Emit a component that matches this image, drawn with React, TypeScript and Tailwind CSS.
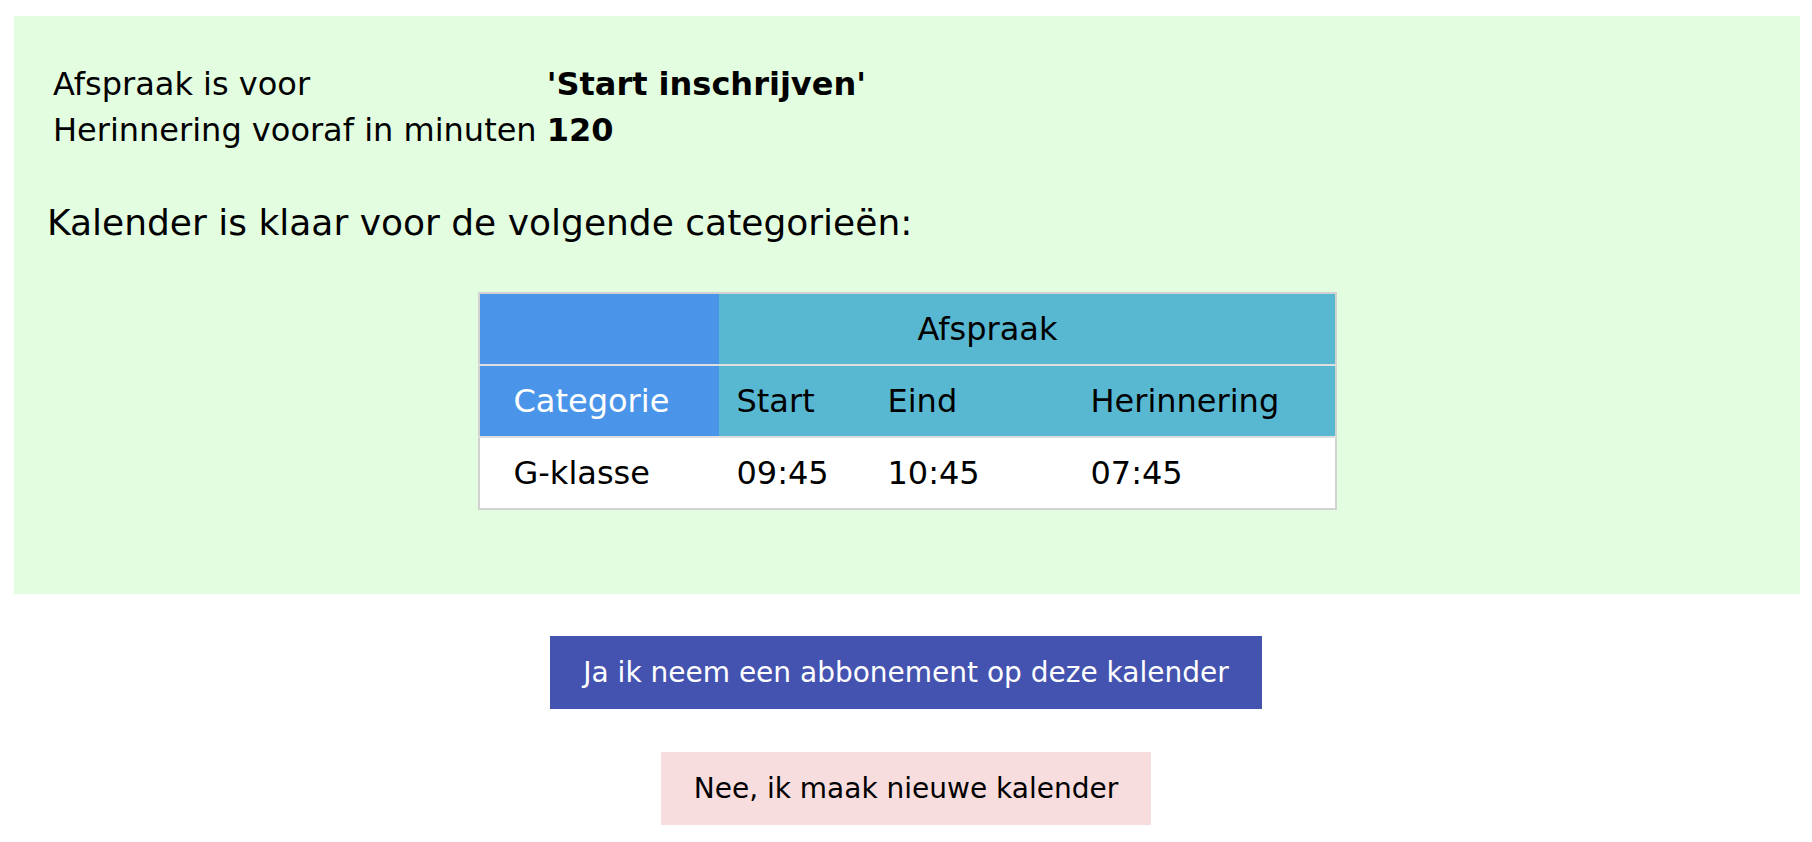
import React from 'react';

interface Row {
  categorie: string;
  start: string;
  eind: string;
  herinnering: string;
}

const rows: Row[] = [{ categorie: 'G-klasse', start: '09:45', eind: '10:45', herinnering: '07:45' }];

const font = { fontFamily: '"DejaVu Sans", Verdana, sans-serif' };

const App = () => {
  return (
    <div className="min-h-screen bg-white pt-[16px] text-black" style={font}>
      <div className="ml-[14px] mr-[12px] h-[578px] bg-[#e2fde0] pt-[45px]">
        <table className="ml-[39px] border-collapse text-[32px] leading-[46px]">
          <tbody>
            <tr className="h-[46px]">
              <td className="p-0 pr-[10px] align-middle">Afspraak is voor</td>
              <td className="p-0 align-middle font-bold">'Start inschrijven'</td>
            </tr>
            <tr className="h-[46px]">
              <td className="p-0 pr-[10px] align-middle">Herinnering vooraf in minuten</td>
              <td className="p-0 align-middle font-bold">120</td>
            </tr>
          </tbody>
        </table>

        <h2 className="ml-[33px] mt-[48px] text-[36px] leading-[44px] font-normal">
          Kalender is klaar voor de volgende categorieën:
        </h2>

        <div className="mt-[47px] flex justify-center">
          <table className="w-[859px] border-collapse border-2 border-[#d2d2d2] text-[32px]">
            <thead>
              <tr className="h-[72px] border-b-2 border-[#dedede]">
                <th className="w-[240px] bg-[#4a95e9] p-0"></th>
                <th colSpan={3} className="bg-[#58b8d2] p-0 pl-[199px] text-left font-normal">
                  Afspraak
                </th>
              </tr>
              <tr className="h-[72px] border-b-2 border-[#dedede]">
                <th className="bg-[#4a95e9] p-0 pl-[34px] text-left font-normal text-white">Categorie</th>
                <th className="w-[151px] bg-[#58b8d2] p-0 pl-[18px] text-left font-normal">Start</th>
                <th className="w-[203px] bg-[#58b8d2] p-0 pl-[18px] text-left font-normal">Eind</th>
                <th className="bg-[#58b8d2] p-0 pl-[18px] text-left font-normal">Herinnering</th>
              </tr>
            </thead>
            <tbody>
              {rows.map((r) => (
                <tr key={r.categorie} className="h-[72px] bg-white">
                  <td className="p-0 pl-[34px]">{r.categorie}</td>
                  <td className="p-0 pl-[18px]">{r.start}</td>
                  <td className="p-0 pl-[18px]">{r.eind}</td>
                  <td className="p-0 pl-[18px]">{r.herinnering}</td>
                </tr>
              ))}
            </tbody>
          </table>
        </div>
      </div>

      <div className="flex flex-col items-center gap-[43px] pt-[42px]">
        <button className="h-[73px] bg-[#4453b0] px-[33px] text-[28px] text-white">
          Ja ik neem een abbonement op deze kalender
        </button>
        <button className="h-[73px] bg-[#f7dddd] px-[33px] text-[28px] text-black">
          Nee, ik maak nieuwe kalender
        </button>
      </div>
    </div>
  );
};

export default App;
